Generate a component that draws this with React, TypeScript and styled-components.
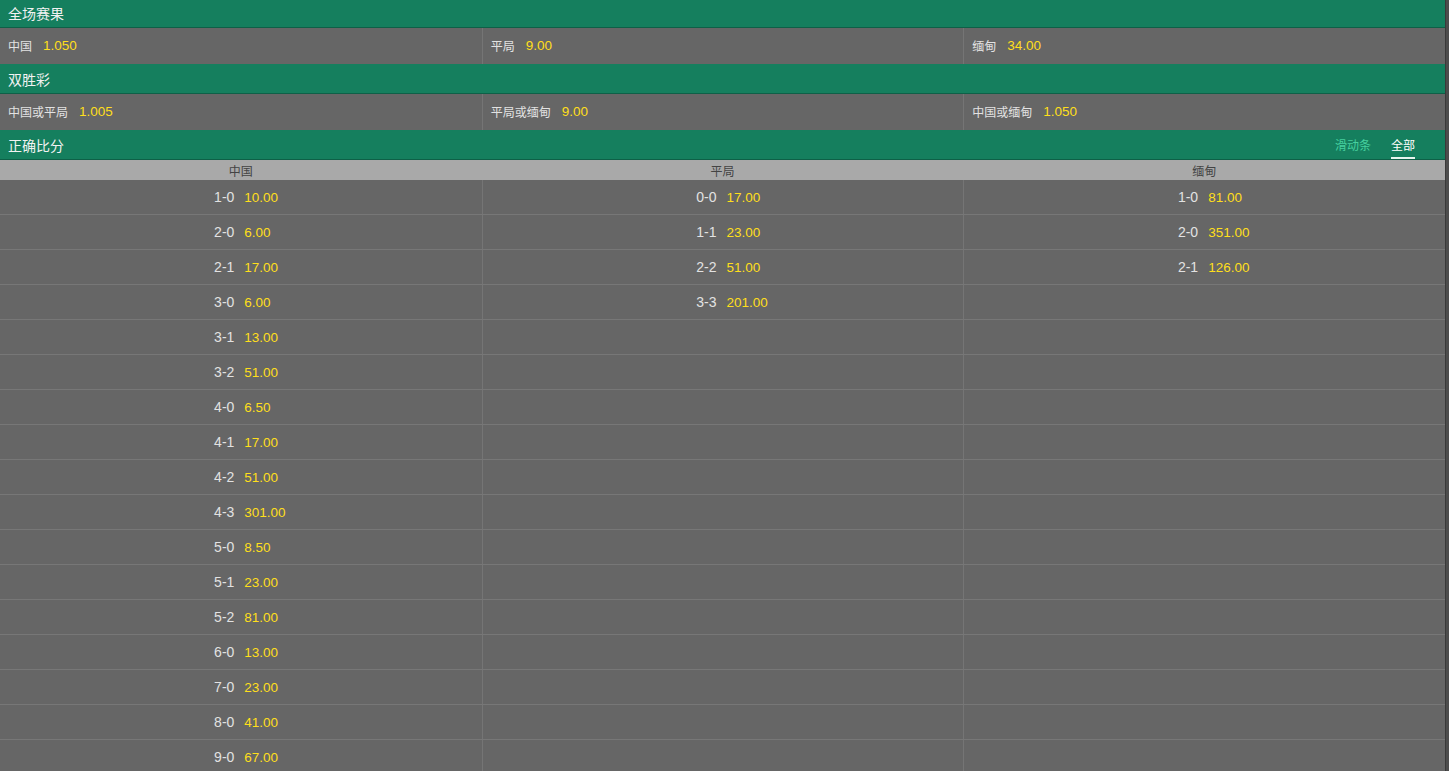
import styled, { createGlobalStyle } from "styled-components";

const GlobalStyle = createGlobalStyle`
  html, body {
    margin: 0;
    padding: 0;
    background: #4d4d4d;
    overflow: hidden;
    font-family: "Liberation Sans", "Noto Sans CJK SC", Arial, sans-serif;
  }
`;

type Pick = { label: string; odds: string };

const fullTime: Pick[] = [
  { label: "中国", odds: "1.050" },
  { label: "平局", odds: "9.00" },
  { label: "缅甸", odds: "34.00" },
];

const doubleChance: Pick[] = [
  { label: "中国或平局", odds: "1.005" },
  { label: "平局或缅甸", odds: "9.00" },
  { label: "中国或缅甸", odds: "1.050" },
];

const home: Pick[] = [
  ["1-0", "10.00"], ["2-0", "6.00"], ["2-1", "17.00"], ["3-0", "6.00"],
  ["3-1", "13.00"], ["3-2", "51.00"], ["4-0", "6.50"], ["4-1", "17.00"],
  ["4-2", "51.00"], ["4-3", "301.00"], ["5-0", "8.50"], ["5-1", "23.00"],
  ["5-2", "81.00"], ["6-0", "13.00"], ["7-0", "23.00"], ["8-0", "41.00"],
  ["9-0", "67.00"],
].map(([label, odds]) => ({ label, odds }));

const draw: Pick[] = [
  ["0-0", "17.00"], ["1-1", "23.00"], ["2-2", "51.00"], ["3-3", "201.00"],
].map(([label, odds]) => ({ label, odds }));

const away: Pick[] = [
  ["1-0", "81.00"], ["2-0", "351.00"], ["2-1", "126.00"],
].map(([label, odds]) => ({ label, odds }));

export default function App() {
  const rows = Array.from({ length: home.length }, (_, i) => [home[i], draw[i], away[i]]);

  return (
    <Page>
      <GlobalStyle />
      <Market>
        <MarketHeader>
          <Title>全场赛果</Title>
        </MarketHeader>
        <PickRow>
          {fullTime.map((p) => (
            <PickCell key={p.label}>
              <Label>{p.label}</Label>
              <Odds>{p.odds}</Odds>
            </PickCell>
          ))}
        </PickRow>

        <MarketHeader>
          <Title>双胜彩</Title>
        </MarketHeader>
        <PickRow>
          {doubleChance.map((p) => (
            <PickCell key={p.label}>
              <Label>{p.label}</Label>
              <Odds>{p.odds}</Odds>
            </PickCell>
          ))}
        </PickRow>

        <MarketHeader>
          <Title>正确比分</Title>
          <Tabs>
            <Tab>滑动条</Tab>
            <Tab $active>全部</Tab>
          </Tabs>
        </MarketHeader>
        <ColumnHead>
          <span>中国</span>
          <span>平局</span>
          <span>缅甸</span>
        </ColumnHead>
        {rows.map((row, i) => (
          <ScoreRow key={i}>
            {row.map((p, j) => (
              <ScoreCell key={j}>
                {p && (
                  <>
                    <Score>{p.label}</Score>
                    <Odds>{p.odds}</Odds>
                  </>
                )}
              </ScoreCell>
            ))}
          </ScoreRow>
        ))}
      </Market>
    </Page>
  );
}

const Page = styled.div`
  width: 1445px;
  height: 771px;
  overflow: hidden;
  border-right: 1px solid #3a3a3a;
  background: #666;
`;

const Market = styled.div`
  margin-top: -2px;
  display: flex;
  flex-direction: column;
`;

const MarketHeader = styled.div`
  height: 29px;
  border-bottom: 1px solid #0e6047;
  background: #157f5e;
  display: flex;
  align-items: center;
  justify-content: space-between;
  padding: 0 30px 0 8px;
`;

const Title = styled.div`
  color: #f2f2f2;
  font-size: 14px;
`;

const Tabs = styled.div`
  display: flex;
  gap: 20px;
  height: 100%;
`;

const Tab = styled.div<{ $active?: boolean }>`
  display: flex;
  align-items: center;
  font-size: 12px;
  color: ${(p) => (p.$active ? "#ffffff" : "#46d09e")};
  box-shadow: ${(p) => (p.$active ? "inset 0 -2px 0 #e8f5ef" : "none")};
`;

const PickRow = styled.div`
  height: 36px;
  display: grid;
  grid-template-columns: repeat(3, 1fr);
  background: #666;
`;

const PickCell = styled.div`
  display: flex;
  align-items: center;
  gap: 11px;
  padding: 0 0 1px 8px;
  & + & {
    border-left: 1px solid #757575;
  }
`;

const Label = styled.span`
  color: #e2e2e2;
  font-size: 12px;
`;

const Odds = styled.span`
  color: #ffdf1b;
  font-size: 13.5px;
`;

const ColumnHead = styled.div`
  height: 20px;
  display: grid;
  grid-template-columns: repeat(3, 1fr);
  background: #a9a9a9;
  color: #444;
  font-size: 12px;
  align-items: center;
  text-align: center;
`;

const ScoreRow = styled.div`
  height: 34px;
  display: grid;
  grid-template-columns: repeat(3, 1fr);
  border-bottom: 1px solid #777;
`;

const ScoreCell = styled.div`
  display: grid;
  grid-template-columns: 1fr 1fr;
  column-gap: 10px;
  align-items: center;
  padding-right: 3px;
  & + & {
    border-left: 1px solid #757575;
  }
`;

const Score = styled.span`
  color: #e2e2e2;
  font-size: 14px;
  text-align: right;
`;
